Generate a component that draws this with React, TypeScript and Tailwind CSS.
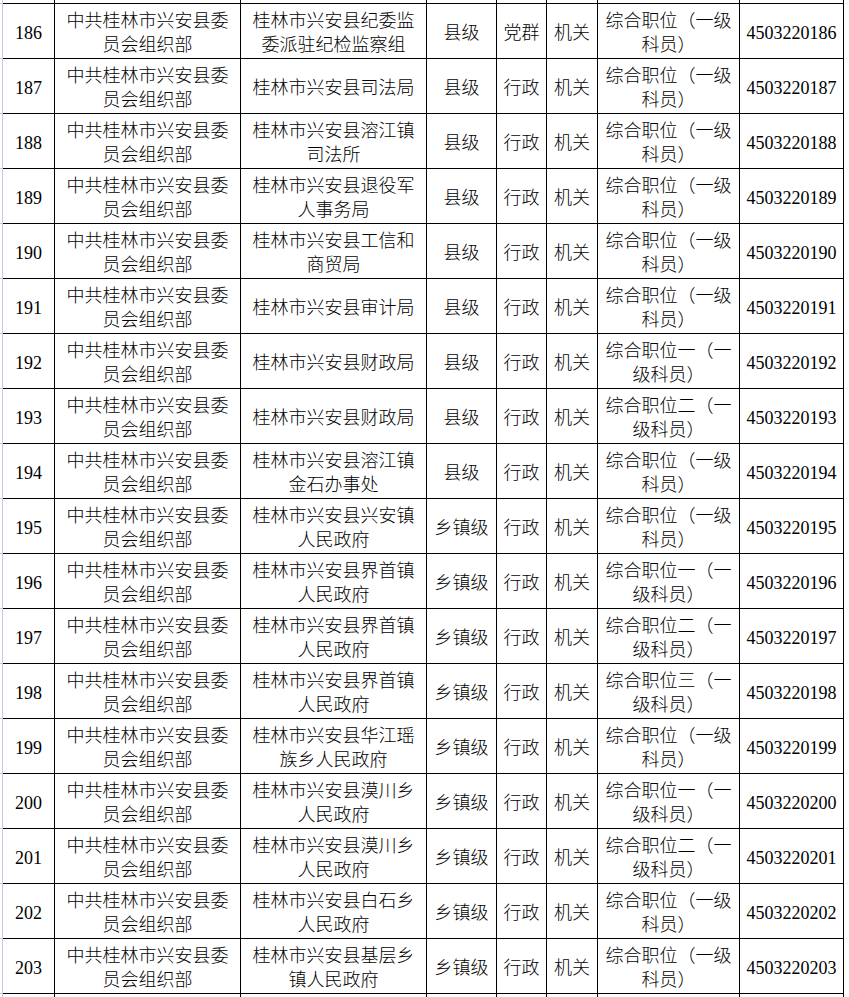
const rows: { id: number; dept: string[]; level: string; kind: string; org: string; post: string[] }[] = [
  { id: 186, dept: ["桂林市兴安县纪委监", "委派驻纪检监察组"], level: "县级", kind: "党群", org: "机关", post: ["综合职位（一级", "科员）"] },
  { id: 187, dept: ["桂林市兴安县司法局"], level: "县级", kind: "行政", org: "机关", post: ["综合职位（一级", "科员）"] },
  { id: 188, dept: ["桂林市兴安县溶江镇", "司法所"], level: "县级", kind: "行政", org: "机关", post: ["综合职位（一级", "科员）"] },
  { id: 189, dept: ["桂林市兴安县退役军", "人事务局"], level: "县级", kind: "行政", org: "机关", post: ["综合职位（一级", "科员）"] },
  { id: 190, dept: ["桂林市兴安县工信和", "商贸局"], level: "县级", kind: "行政", org: "机关", post: ["综合职位（一级", "科员）"] },
  { id: 191, dept: ["桂林市兴安县审计局"], level: "县级", kind: "行政", org: "机关", post: ["综合职位（一级", "科员）"] },
  { id: 192, dept: ["桂林市兴安县财政局"], level: "县级", kind: "行政", org: "机关", post: ["综合职位一（一", "级科员）"] },
  { id: 193, dept: ["桂林市兴安县财政局"], level: "县级", kind: "行政", org: "机关", post: ["综合职位二（一", "级科员）"] },
  { id: 194, dept: ["桂林市兴安县溶江镇", "金石办事处"], level: "县级", kind: "行政", org: "机关", post: ["综合职位（一级", "科员）"] },
  { id: 195, dept: ["桂林市兴安县兴安镇", "人民政府"], level: "乡镇级", kind: "行政", org: "机关", post: ["综合职位（一级", "科员）"] },
  { id: 196, dept: ["桂林市兴安县界首镇", "人民政府"], level: "乡镇级", kind: "行政", org: "机关", post: ["综合职位一（一", "级科员）"] },
  { id: 197, dept: ["桂林市兴安县界首镇", "人民政府"], level: "乡镇级", kind: "行政", org: "机关", post: ["综合职位二（一", "级科员）"] },
  { id: 198, dept: ["桂林市兴安县界首镇", "人民政府"], level: "乡镇级", kind: "行政", org: "机关", post: ["综合职位三（一", "级科员）"] },
  { id: 199, dept: ["桂林市兴安县华江瑶", "族乡人民政府"], level: "乡镇级", kind: "行政", org: "机关", post: ["综合职位（一级", "科员）"] },
  { id: 200, dept: ["桂林市兴安县漠川乡", "人民政府"], level: "乡镇级", kind: "行政", org: "机关", post: ["综合职位一（一", "级科员）"] },
  { id: 201, dept: ["桂林市兴安县漠川乡", "人民政府"], level: "乡镇级", kind: "行政", org: "机关", post: ["综合职位二（一", "级科员）"] },
  { id: 202, dept: ["桂林市兴安县白石乡", "人民政府"], level: "乡镇级", kind: "行政", org: "机关", post: ["综合职位（一级", "科员）"] },
  { id: 203, dept: ["桂林市兴安县基层乡", "镇人民政府"], level: "乡镇级", kind: "行政", org: "机关", post: ["综合职位（一级", "科员）"] },
];

const cell = "flex flex-col items-center justify-center text-center border-r border-b border-black pt-[4px]";

const Lines = ({ lines }: { lines: string[] }) => (
  <>
    {lines.map((l, i) => (
      <span key={i} className="block whitespace-nowrap">{l}</span>
    ))}
  </>
);

export default function App() {
  return (
    <div
      className="w-[849px] h-[997px] overflow-hidden bg-white text-black text-[18px] leading-[24px] font-light"
      style={{ fontFamily: '"Liberation Serif", "Noto Sans CJK SC", serif' }}
    >
      <div className="grid grid-cols-[3px_52px_186px_186px_70px_50px_51px_142px_104px]">
        {/* partial row above */}
        <div className="h-[4px] border-r border-b border-[#c5cadc]" />
        {Array.from({ length: 8 }).map((_, i) => (
          <div key={i} className="h-[4px] border-r border-b border-black" />
        ))}

        {rows.map((r) => (
          <div key={r.id} className="contents">
            <div className="h-[55px] border-r border-b border-[#c5cadc]" />
            <div className={cell}>{r.id}</div>
            <div className={cell}>
              <Lines lines={["中共桂林市兴安县委", "员会组织部"]} />
            </div>
            <div className={cell}>
              <Lines lines={r.dept} />
            </div>
            <div className={cell}>{r.level}</div>
            <div className={cell}>{r.kind}</div>
            <div className={cell}>{r.org}</div>
            <div className={cell}>
              <Lines lines={r.post} />
            </div>
            <div className={cell}>{`4503220${r.id}`}</div>
          </div>
        ))}

        {/* partial row below */}
        <div className="h-[8px] border-r border-[#c5cadc]" />
        {Array.from({ length: 8 }).map((_, i) => (
          <div key={i} className="h-[8px] border-r border-black" />
        ))}
      </div>
    </div>
  );
}
